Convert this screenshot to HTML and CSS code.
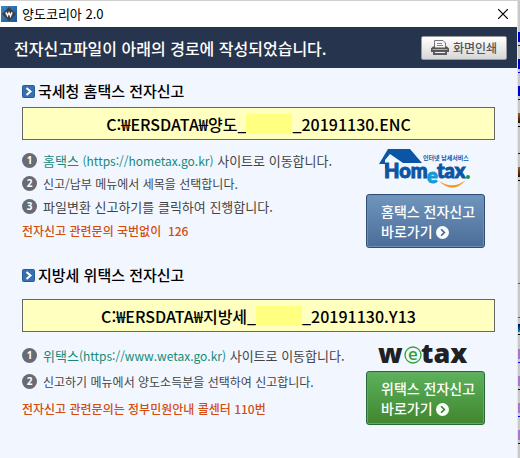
FILE: index.html
```html
<!DOCTYPE html>
<html lang="ko">
<head>
<meta charset="utf-8">
<title>양도코리아 2.0</title>
<link rel="stylesheet" href="styles.css">
</head>
<body>
<div class="desktop">
  <div class="window">
    <header class="titlebar">
      <svg class="app-icon" viewBox="0 0 16 16" aria-hidden="true">
        <defs><linearGradient id="app" x1="0" y1="0" x2="1" y2="1"><stop offset="0" stop-color="#3f86c4"/><stop offset="1" stop-color="#1b5595"/></linearGradient></defs>
        <rect width="16" height="16" fill="url(#app)"/>
        <path d="M8 1l7 7-7 7-7-7z" fill="#3b3d42"/>
        <path d="M5 6l1.500 4L8 6.500l1.500 4L11 6M4.500 8h7" fill="none" stroke="#fff" stroke-width="1.200"/>
      </svg>
      <span class="app-name">양도코리아 2.0</span>
      <button class="close" type="button" aria-label="닫기">
        <svg viewBox="0 0 10 10" width="10" height="10"><path d="M0 0l10 10M10 0L0 10" stroke="#000" stroke-width="1.200"/></svg>
      </button>
    </header>

    <div class="banner">
      <h1>전자신고파일이 아래의 경로에 작성되었습니다.</h1>
      <button class="print" type="button">
        <svg viewBox="0 0 18 15" width="18" height="15" aria-hidden="true">
          <path d="M3.500 7V.5h8.500l2.500 2.500v4" fill="#f4f4f4" stroke="#777"/>
          <path d="M6 3.500h5M6 5.500h6" stroke="#888"/>
          <path d="M2 6.500h2v1h10v-1h2l2 2V12H0V8.500z" fill="#555"/>
          <path d="M1.500 9.500h15" stroke="#aaa"/>
          <path d="M2 11h14v4H2z" fill="#5a5a5a"/>
          <path d="M4 12.500h10" stroke="#f4f4f4"/>
        </svg>
        화면인쇄
      </button>
    </div>

    <main>
      <section class="filing">
        <h2><svg class="marker" viewBox="0 0 13 13" aria-hidden="true"><rect x=".5" y=".5" width="12" height="12" rx="1" fill="#3470b2" stroke="#285a96"/><path d="M4.500 3l4 3.500-4 3.500" fill="none" stroke="#fff" stroke-width="2"/></svg>국세청 홈택스 전자신고</h2>
        <p class="path">C:₩ERSDATA₩양도_<span class="masked"></span>_20191130.ENC</p>
        <div class="details">
          <div class="guide">
            <ol>
              <li><span class="num">1</span><span><a href="https://hometax.go.kr">홈택스 <span class="url">(https://hometax.go.kr)</span></a> 사이트로 이동합니다.</span></li>
              <li class="small"><span class="num">2</span><span>신고/납부 메뉴에서 세목을 선택합니다.</span></li>
              <li><span class="num">3</span><span>파일변환 신고하기를 클릭하여 진행합니다.</span></li>
            </ol>
            <p class="contact">전자신고 관련문의 국번없이&nbsp; 126</p>
          </div>
          <div class="shortcut">
            <svg class="logo" viewBox="0 0 97 42" width="97" height="42" role="img" aria-label="Hometax">
              <path d="M1 17L10 2h22l12 14H25L12 7l-5 6v4z" fill="#0b56a4"/>
              <path d="M7 16h3v5H7z" fill="#0b56a4"/>
              <text class="logo-tag" x="45" y="13">인터넷 납세서비스</text>
              <text class="logo-home" x="6" y="31">Hom</text>
              <text class="logo-e" x="49" y="36">e</text>
              <text class="logo-home" x="59" y="31">tax</text>
              <circle cx="90" cy="30" r="2" fill="#159447"/>
              <path d="M61 34Q75 48 88 33Q75 43 61 34z" fill="#f39a20"/>
            </svg>
            <a class="go blue" href="https://hometax.go.kr">홈택스 전자신고<br>바로가기
              <svg viewBox="0 0 14 14" width="13" height="13" aria-hidden="true"><circle cx="7" cy="7" r="7" fill="#f6fbff"/><path d="M5.500 3.500L9 7l-3.500 3.500" fill="none" stroke="#42658f" stroke-width="1.800"/></svg></a>
          </div>
        </div>
      </section>

      <section class="filing">
        <h2><svg class="marker" viewBox="0 0 13 13" aria-hidden="true"><rect x=".5" y=".5" width="12" height="12" rx="1" fill="#3470b2" stroke="#285a96"/><path d="M4.500 3l4 3.500-4 3.500" fill="none" stroke="#fff" stroke-width="2"/></svg>지방세 위택스 전자신고</h2>
        <p class="path">C:₩ERSDATA₩지방세_<span class="masked"></span>_20191130.Y13</p>
        <div class="details">
          <div class="guide roomy">
            <ol>
              <li><span class="num">1</span><span><a href="https://www.wetax.go.kr">위택스<span class="url">(https://www.wetax.go.kr)</span></a> 사이트로 이동합니다.</span></li>
              <li class="small"><span class="num">2</span><span>신고하기 메뉴에서 양도소득분을 선택하여 신고합니다.</span></li>
            </ol>
            <p class="contact">전자신고 관련문의는 정부민원안내 콜센터 110번</p>
          </div>
          <div class="shortcut tight">
            <svg class="logo" viewBox="0 0 97 39" width="97" height="39" role="img" aria-label="Wetax">
              <text class="logo-we" x="0" y="31">w</text>
              <circle cx="35" cy="23" r="8" fill="none" stroke="#35a030" stroke-width="1.300"/>
              <text class="logo-we-e" x="30" y="28">e</text>
              <text class="logo-we" x="43" y="31">tax</text>
            </svg>
            <a class="go green" href="https://www.wetax.go.kr">위택스 전자신고<br>바로가기
              <svg viewBox="0 0 14 14" width="13" height="13" aria-hidden="true"><circle cx="7" cy="7" r="7" fill="#f8fff6"/><path d="M5.500 3.500L9 7l-3.500 3.500" fill="none" stroke="#387f30" stroke-width="1.800"/></svg></a>
          </div>
        </div>
      </section>
    </main>
  </div>
  <div class="behind"></div>
</div>
</body>
</html>
```

FILE: styles.css
```css
* { box-sizing: border-box; }
body {
  margin: 0;
  font-family: "Noto Sans CJK KR", sans-serif;
  font-size: 13px;
  color: #444;
}
h1, h2, p, ol { margin: 0; padding: 0; }
button { font: inherit; cursor: pointer; }
a { color: inherit; text-decoration: none; }

.desktop {
  display: flex;
  min-height: 100vh;
  border-top: 1px solid #d0d0d0;
}
.window {
  flex: 1;
  background: #f2f7ff;
  border-right: 1px solid #e4e6ea;
}
.behind {
  width: 2px;
  background:
    linear-gradient(#0000c8, #0000c8) 0 31px / 2px 10px no-repeat,
    linear-gradient(#0000ff, #0000ff) 0 44px / 2px 1px no-repeat,
    linear-gradient(#0000c8, #0000c8) 0 58px / 2px 10px no-repeat,
    linear-gradient(#0000ff, #0000ff) 0 71px / 2px 1px no-repeat,
    linear-gradient(#0000c8, #0000c8) 0 85px / 2px 10px no-repeat,
    linear-gradient(#0000ff, #0000ff) 0 98px / 2px 1px no-repeat,
    linear-gradient(#a05a20, #221100) 0 112px / 2px 10px no-repeat,
    linear-gradient(#000, #000) 0 125px / 2px 1px no-repeat,
    linear-gradient(#0000ff, #0000ff) 0 152px / 2px 1px no-repeat,
    linear-gradient(#a05a20, #221100) 0 166px / 2px 10px no-repeat,
    linear-gradient(#000, #000) 0 179px / 2px 1px no-repeat,
    linear-gradient(#555, #555) 0 282px / 2px 1px no-repeat,
    linear-gradient(#555, #555) 0 316px / 2px 1px no-repeat,
    linear-gradient(#000050, #0090b0) 0 323px / 2px 8px no-repeat,
    linear-gradient(#000, #000) 0 333px / 2px 1px no-repeat,
    linear-gradient(#a878c8, #a878c8) 0 348px / 2px 10px no-repeat,
    linear-gradient(#0000ff, #0000ff) 0 361px / 2px 1px no-repeat,
    linear-gradient(#a878c8, #a878c8) 0 375px / 2px 10px no-repeat,
    linear-gradient(#0000c8, #0000c8) 0 388px / 2px 1px no-repeat,
    linear-gradient(#a878c8, #a878c8) 0 402px / 2px 10px no-repeat,
    linear-gradient(#0000ff, #0000ff) 0 415px / 2px 1px no-repeat,
    linear-gradient(#a878c8, #a878c8) 0 429px / 2px 10px no-repeat,
    linear-gradient(#0000c8, #0000c8) 0 442px / 2px 1px no-repeat,
    #c8c8c8;
}

.titlebar {
  display: flex;
  align-items: center;
  height: 26px;
  padding: 0 9px 0 1px;
  background: #fff;
  color: #000;
}
.app-icon { width: 16px; height: 16px; margin-right: 5px; }
.app-name { flex: 1; font-size: 13px; line-height: 20px; }
.close {
  display: flex;
  padding: 0;
  border: 0;
  background: none;
}

.banner {
  display: flex;
  align-items: center;
  justify-content: space-between;
  height: 41px;
  padding: 0 10px 0 14px;
  background: #27344d;
}
h1 {
  color: #fff;
  font-size: 16px;
  font-weight: 500;
  line-height: 24px;
}
.print {
  display: flex;
  align-items: center;
  justify-content: center;
  gap: 4px;
  width: 86px;
  height: 24px;
  padding: 0;
  border: 1px solid #999;
  border-radius: 2px;
  background: linear-gradient(#fff, #d6d6d6);
  color: #555;
  font-size: 12px;
  font-weight: 500;
}

main { padding: 11px 22px; }
.filing + .filing { margin-top: 15px; }
h2 {
  display: flex;
  align-items: center;
  gap: 3px;
  color: #000;
  font-size: 15px;
  font-weight: 500;
  line-height: 24px;
}
.marker { width: 13px; height: 13px; }
.path {
  display: flex;
  align-items: center;
  justify-content: center;
  height: 33px;
  margin-top: 4px;
  border: 1px solid #666;
  background: #ffffc0;
  color: #000;
  font-size: 16px;
  font-weight: 500;
}
.filing + .filing .path { margin-top: 12px; }
.masked { width: 46px; height: 20px; background: #ffff80; }

.details { display: grid; grid-template-columns: 1fr 119px; padding-right: 10px; }
.guide { padding-top: 9px; }
ol { list-style: none; }
li {
  display: flex;
  align-items: center;
  gap: 6px;
  line-height: 23px;
  white-space: nowrap;
}
.small, .url { font-size: 12px; }
li a { color: #168a78; }
.num {
  width: 15px;
  height: 15px;
  border-radius: 50%;
  background: #666b75;
  color: #fff;
  font-family: "Open Sans", sans-serif;
  font-size: 10px;
  font-weight: 700;
  line-height: 15px;
  text-align: center;
}
.contact {
  margin-top: 3px;
  color: #d44d10;
  font-size: 12px;
  font-weight: 500;
  line-height: 20px;
  white-space: nowrap;
}
.roomy { padding-top: 12px; }
.roomy li + li { margin-top: 3px; }
.roomy .contact { margin-top: 6px; }

.shortcut { padding-top: 7px; }
.logo { display: block; margin: 0 0 5px 12px; }
.tight { padding-top: 0; }
.tight .logo { margin-bottom: 0; }
.go {
  display: block;
  padding: 6px 0 6px 14px;
  border: 1px solid #304c78;
  border-radius: 3px;
  color: #fff;
  font-size: 14px;
  font-weight: 500;
  line-height: 20px;
  white-space: nowrap;
}
.go svg { vertical-align: -2px; }
.blue { background: linear-gradient(#7096bd, #4b6d99); box-shadow: inset 0 0 0 1px #6d8fb5; }
.green { background: linear-gradient(#5db15d, #40862e); border-color: #28683a; box-shadow: inset 0 0 0 1px #64ac5c; }

.logo-tag { font: 700 6px "Noto Sans CJK KR", sans-serif; fill: #0b56a4; }
.logo-home { font: 900 20px Lato, sans-serif; fill: #0b56a4; stroke: #0b56a4; stroke-width: 1px; }
.logo-e { font: 900 20px Lato, sans-serif; fill: #159ad8; stroke: #159ad8; stroke-width: 1px; }
.logo-we { font: 800 27px "Open Sans", sans-serif; fill: #202124; }
.logo-we-e { font: 600 17px "Open Sans", sans-serif; fill: #35a030; }
```
